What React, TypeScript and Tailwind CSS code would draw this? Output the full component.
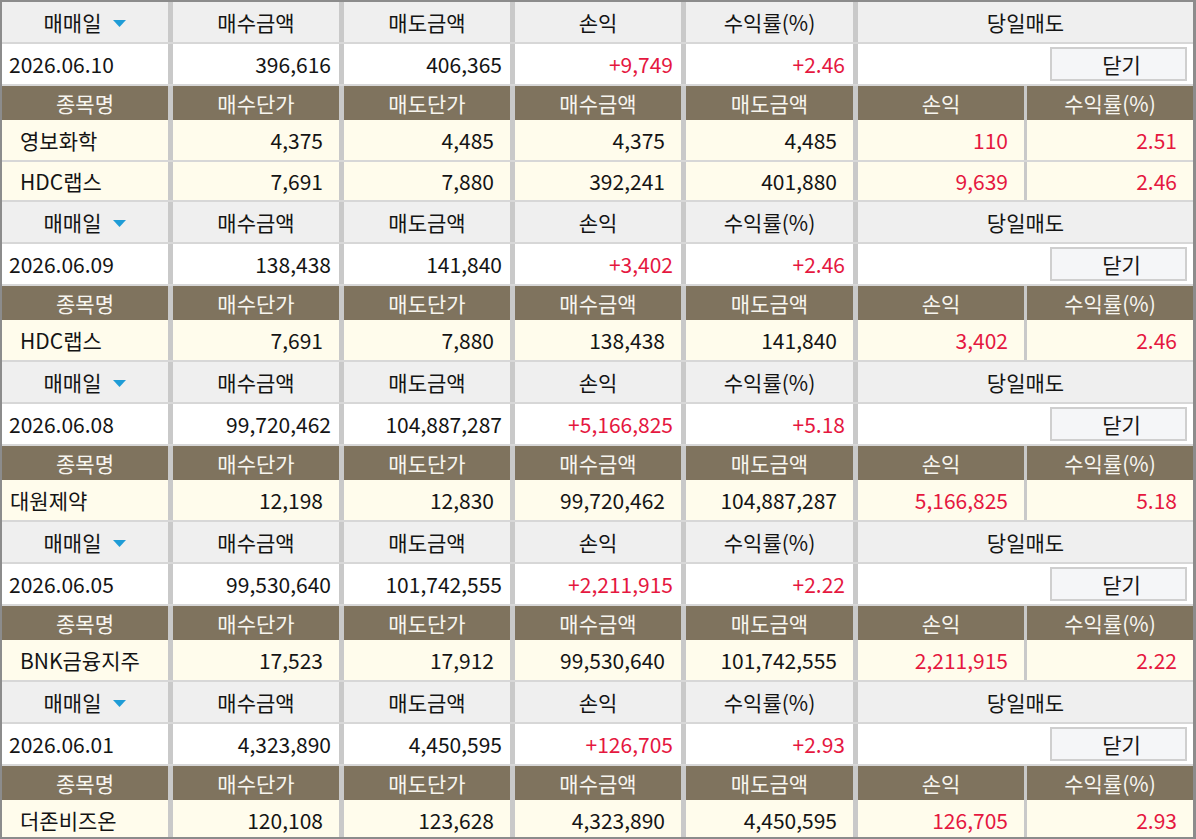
import React from 'react';

type Item = [string, string, string, string, string, string, string];

type Group = {
  date: string;
  buy: string;
  sell: string;
  pl: string;
  rate: string;
  items: Item[];
};

const groups: Group[] = [
  {
    date: '2026.06.10', buy: '396,616', sell: '406,365', pl: '+9,749', rate: '+2.46',
    items: [
      ['영보화학', '4,375', '4,485', '4,375', '4,485', '110', '2.51'],
      ['HDC랩스', '7,691', '7,880', '392,241', '401,880', '9,639', '2.46'],
    ],
  },
  {
    date: '2026.06.09', buy: '138,438', sell: '141,840', pl: '+3,402', rate: '+2.46',
    items: [['HDC랩스', '7,691', '7,880', '138,438', '141,840', '3,402', '2.46']],
  },
  {
    date: '2026.06.08', buy: '99,720,462', sell: '104,887,287', pl: '+5,166,825', rate: '+5.18',
    items: [['대원제약', '12,198', '12,830', '99,720,462', '104,887,287', '5,166,825', '5.18']],
  },
  {
    date: '2026.06.05', buy: '99,530,640', sell: '101,742,555', pl: '+2,211,915', rate: '+2.22',
    items: [['BNK금융지주', '17,523', '17,912', '99,530,640', '101,742,555', '2,211,915', '2.22']],
  },
  {
    date: '2026.06.01', buy: '4,323,890', sell: '4,450,595', pl: '+126,705', rate: '+2.93',
    items: [['더존비즈온', '120,108', '123,628', '4,323,890', '4,450,595', '126,705', '2.93']],
  },
];

const rowGrid = 'grid grid-cols-[166px_166px_166px_166px_167px_1fr] gap-x-[5px] bg-[#c9c9c9]';
const hLine = <div className="h-[2px] bg-[#d7d7d7]" />;

const SortArrow = () => (
  <svg width="13" height="7" viewBox="0 0 13 7" className="ml-[12px] mt-[2px]">
    <polygon points="0,0 13,0 6.5,7" fill="#1f9cd6" />
  </svg>
);

const GroupHeader = () => (
  <div className={`${rowGrid} h-[40px]`}>
    <div className="flex items-center justify-center bg-[#efefef]">
      <span>매매일</span>
      <SortArrow />
    </div>
    <div className="flex items-center justify-center bg-[#efefef]">매수금액</div>
    <div className="flex items-center justify-center bg-[#efefef]">매도금액</div>
    <div className="flex items-center justify-center bg-[#efefef]">손익</div>
    <div className="flex items-center justify-center bg-[#efefef]">수익률(%)</div>
    <div className="flex items-center justify-center bg-[#efefef]">당일매도</div>
  </div>
);

const SummaryRow = ({ g }: { g: Group }) => (
  <div className={`${rowGrid} h-[40px]`}>
    <div className="flex items-center bg-white pl-[7px]">{g.date}</div>
    <div className="flex items-center justify-end bg-white pr-[8px]">{g.buy}</div>
    <div className="flex items-center justify-end bg-white pr-[8px]">{g.sell}</div>
    <div className="flex items-center justify-end bg-white pr-[8px] text-[#e5173f]">{g.pl}</div>
    <div className="flex items-center justify-end bg-white pr-[8px] text-[#e5173f]">{g.rate}</div>
    <div className="flex items-center justify-end bg-white pr-[6px]">
      <button className="flex h-[34px] w-[137px] items-center justify-center border-2 border-[#cfcfcf] bg-[#f5f6f8] pt-[1px] pl-[6px]">
        닫기
      </button>
    </div>
  </div>
);

const ItemHeader = () => (
  <div className={`${rowGrid} h-[34px] text-[#f7f5ef]`}>
    <div className="flex items-center justify-center bg-[#7f735e]">종목명</div>
    <div className="flex items-center justify-center bg-[#7f735e]">매수단가</div>
    <div className="flex items-center justify-center bg-[#7f735e]">매도단가</div>
    <div className="flex items-center justify-center bg-[#7f735e]">매수금액</div>
    <div className="flex items-center justify-center bg-[#7f735e]">매도금액</div>
    <div className="grid grid-cols-2 gap-x-[3px]">
      <div className="flex items-center justify-center bg-[#7f735e]">손익</div>
      <div className="flex items-center justify-center bg-[#7f735e]">수익률(%)</div>
    </div>
  </div>
);

const ItemRow = ({ it, h }: { it: Item; h: string }) => (
  <div className={`${rowGrid} ${h}`}>
    <div className={`flex items-center bg-[#fffcec] ${it[0] === '대원제약' ? 'pl-[8px]' : 'pl-[18px]'}`}>{it[0]}</div>
    <div className="flex items-center justify-end bg-[#fffcec] pr-[16px]">{it[1]}</div>
    <div className="flex items-center justify-end bg-[#fffcec] pr-[16px]">{it[2]}</div>
    <div className="flex items-center justify-end bg-[#fffcec] pr-[16px]">{it[3]}</div>
    <div className="flex items-center justify-end bg-[#fffcec] pr-[16px]">{it[4]}</div>
    <div className="grid grid-cols-2 gap-x-[3px] text-[#e5173f]">
      <div className="flex items-center justify-end bg-[#fffcec] pr-[16px]">{it[5]}</div>
      <div className="flex items-center justify-end bg-[#fffcec] pr-[16px]">{it[6]}</div>
    </div>
  </div>
);

export default function App() {
  return (
    <div className="h-[839px] w-[1196px] overflow-hidden border-b-2 border-l-2 border-r-[3px] border-t-2 border-[#8c8c8c] bg-white font-['Noto_Sans_CJK_KR',sans-serif] text-[21px] leading-none text-[#141414]">
      {groups.map((g, gi) => (
        <div key={gi}>
          <GroupHeader />
          {hLine}
          <SummaryRow g={g} />
          {hLine}
          <ItemHeader />
          {g.items.map((it, ii) => (
            <React.Fragment key={ii}>
              {ii > 0 && hLine}
              <ItemRow it={it} h={gi === 0 && ii > 0 ? 'h-[38px]' : 'h-[40px]'} />
            </React.Fragment>
          ))}
          {hLine}
        </div>
      ))}
    </div>
  );
}
